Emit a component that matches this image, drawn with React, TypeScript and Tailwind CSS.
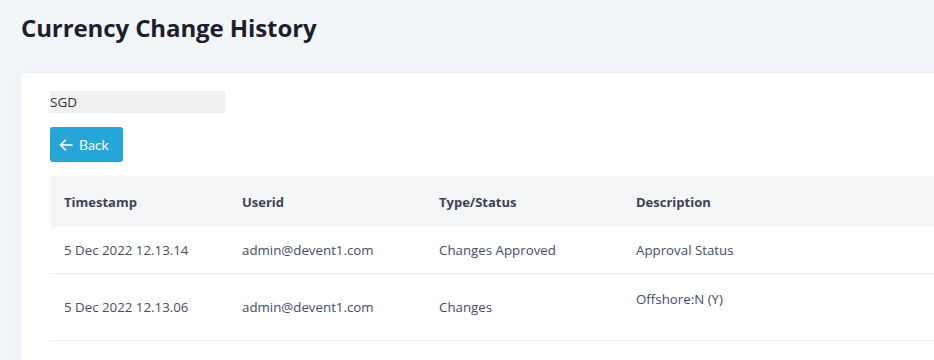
import React from 'react';

const rows = [
  { ts: '5 Dec 2022 12.13.14', user: 'admin@devent1.com', type: 'Changes Approved', desc: 'Approval Status', tall: false },
  { ts: '5 Dec 2022 12.13.06', user: 'admin@devent1.com', type: 'Changes', desc: 'Offshore:N (Y)', tall: true },
];

const App: React.FC = () => {
  return (
    <div className="w-[934px] h-[360px] overflow-hidden bg-[#f3f6f9] font-['Open_Sans',sans-serif]">
      <h1 className="pt-[11px] pl-[21px] text-[24px] font-bold text-[#1e1e2d] tracking-[-0.1px] leading-[34px]">
        Currency Change History
      </h1>

      <div className="mt-[28px] ml-[21px] w-[1000px] h-[400px] bg-white rounded-tl-[5px] shadow-[0_0_20px_0_rgba(76,87,125,0.06)] pt-[18px] pl-[29px]">
        <div className="w-[175px] h-[22px] bg-[#f1f1f1] text-[13.5px] text-[#333] leading-[22px]">
          SGD
        </div>

        <button className="mt-[14px] h-[35px] w-[73px] flex items-center gap-[5px] pl-[8px] bg-[#26a5d7] rounded-[3px] text-white text-[14px] font-['Lato',sans-serif]">
          <svg width="16" height="16" viewBox="0 0 16 16" fill="none" stroke="currentColor" strokeWidth="1.6" strokeLinecap="round" strokeLinejoin="round">
            <path d="M14 8H2.5" />
            <path d="M7.5 3L2.5 8l5 5" />
          </svg>
          <span>Back</span>
        </button>

        <div className="mt-[14px] w-[971px]">
          <div className="flex h-[51px] items-center pt-[2px] bg-[#f5f6f8] text-[13px] font-bold text-[#3f4254]">
            <div className="w-[178px] pl-[14px]">Timestamp</div>
            <div className="w-[197px] pl-[14px]">Userid</div>
            <div className="w-[197px] pl-[14px]">Type/Status</div>
            <div className="flex-1 pl-[14px]">Description</div>
          </div>
          {rows.map((r) => (
            <div
              key={r.ts}
              className={`flex border-b border-[#ebedf3] text-[13.3px] text-[#464e5f] ${r.tall ? 'h-[67px]' : 'h-[47px]'}`}
            >
              <div className="w-[178px] pl-[14px] flex items-center pt-[2px]">{r.ts}</div>
              <div className="w-[197px] pl-[14px] flex items-center pt-[2px]">{r.user}</div>
              <div className="w-[197px] pl-[14px] flex items-center pt-[2px]">{r.type}</div>
              <div className={`flex-1 pl-[14px] flex ${r.tall ? 'items-start pt-[16px]' : 'items-center pt-[2px]'}`}>{r.desc}</div>
            </div>
          ))}
        </div>
      </div>
    </div>
  );
};

export default App;
